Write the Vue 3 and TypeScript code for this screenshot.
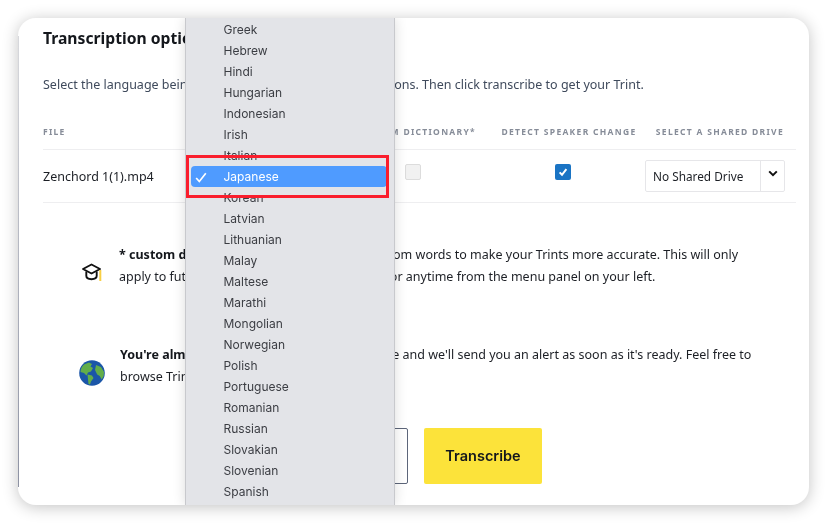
<script setup lang="ts">
const languages: string[] = ['Greek','Hebrew','Hindi','Hungarian','Indonesian','Irish','Italian','Japanese','Korean','Latvian','Lithuanian','Malay','Maltese','Marathi','Mongolian','Norwegian','Polish','Portuguese','Romanian','Russian','Slovakian','Slovenian','Spanish']
const selected = 'Japanese'
</script>

<template>
  <div class="page">
    <section class="card">
      <h1 class="title">Transcription options</h1>
      <p class="desc">Select the language being spoken and the transcription options. Then click transcribe to get your Trint.</p>

      <div class="table-row head">
        <span>FILE</span>
        <span class="center shift-a">CUSTOM DICTIONARY*</span>
        <span class="center shift-b">DETECT SPEAKER CHANGE</span>
        <span class="right">SELECT A SHARED DRIVE</span>
      </div>
      <div class="table-row body">
        <span class="file">Zenchord 1(1).mp4</span>
        <span class="center"><i class="box"></i></span>
        <span class="center">
          <i class="box on">
            <svg width="16" height="16" viewBox="0 0 16 16"><path d="M4.6 8.4 7 10.8 11.4 5.2" fill="none" stroke="#fff" stroke-width="2"/></svg>
          </i>
        </span>
        <div class="select">
          <span class="select-text">No Shared Drive</span>
          <span class="select-arrow">
            <svg width="10" height="7" viewBox="0 0 10 7"><path d="M1.2 1.4 5 5.2 8.8 1.4" fill="none" stroke="#111" stroke-width="2"/></svg>
          </span>
        </div>
      </div>

      <div class="note first">
        <span class="note-icon">
          <svg width="24" height="22" viewBox="0 0 24 22">
            <path d="M11.5 2.5 20 7l-8.500 4.500L3 7z" fill="none" stroke="#111" stroke-width="1.900" stroke-linejoin="round"/>
            <path d="M6.300 9.500v4.300c0 2.200 2.400 3.400 5.200 3.400s5.200-1.200 5.200-3.400V9.500" fill="none" stroke="#111" stroke-width="1.900"/>
            <rect x="19.300" y="8" width="2" height="11" fill="#f8cf45"/>
          </svg>
        </span>
        <div class="note-text">
          <p><b>* custom dictionary:</b> Add your own list of custom words to make your Trints more accurate. This will only</p>
          <p>apply to future uploads. Edit your dictionaries or anytime from the menu panel on your left.</p>
        </div>
      </div>

      <div class="note second">
        <span class="note-icon">
          <svg width="26" height="26" viewBox="0 0 26 26">
            <circle cx="13" cy="13" r="12.800" fill="#1b56a8"/>
            <path d="M5 4.500 10 2.500 13 4l-1.500 2.500L14 8l-2 3.500-3 1-1.500 3L5 13l-3.500-1C1.500 9 3 6 5 4.500z" fill="#63ae4a"/>
            <path d="M8.500 14.500 13 15.500 14.500 18 12 21.500 11 24.500 9.500 24 9 19.500z" fill="#63ae4a"/>
            <path d="M17 5l5 2 3 5-.3 4-2 3.500-2-3.500-2.500-1.500L16 10z" fill="#63ae4a"/>
          </svg>
        </span>
        <div class="note-text">
          <p><b>You're almost there!</b> We're transcribing the file and we'll send you an alert as soon as it's ready. Feel free to</p>
          <p>browse Trint while you wait.</p>
        </div>
      </div>

      <div class="actions">
        <button class="btn cancel" type="button">Cancel</button>
        <button class="btn primary" type="button">Transcribe</button>
      </div>

      <ul class="menu">
        <li v-for="lang in languages" :key="lang" :class="{ active: lang === selected }">
          <svg v-if="lang === selected" class="tick" width="12" height="11" viewBox="0 0 12 11"><path d="M1.200 6 4.300 9.500 10.800 1.200" fill="none" stroke="#fff" stroke-width="1.700"/></svg>
          {{ lang }}
        </li>
      </ul>
      <div class="callout"></div>
    </section>
  </div>
</template>

<style>
html, body { background: #fff; }
</style>

<style scoped>
.page {
  width: 827px;
  height: 523px;
  box-sizing: border-box;
  padding: 18px;
  overflow: hidden;
  font-family: "Noto Sans", sans-serif;
}
.card {
  position: relative;
  width: 791px;
  height: 487px;
  box-sizing: border-box;
  padding: 8px 13px 0 25px;
  background: #fff;
  border-radius: 18px;
  box-shadow: 0 2px 16px rgba(0, 0, 0, .24);
  overflow: hidden;
  filter: blur(.35px);
}
.card::before {
  content: "";
  position: absolute;
  left: 0;
  top: 18px;
  bottom: 18px;
  width: 1px;
  background: linear-gradient(#d8d9dd, #8d92a3);
}
.title {
  margin: 0;
  font-size: 15.700px;
  line-height: 24px;
  font-weight: 700;
  color: #14171c;
}
.desc {
  margin: 25px 0 0;
  font-size: 12.500px;
  line-height: 20px;
  color: #3f4a5c;
  white-space: nowrap;
}
.table-row {
  display: grid;
  grid-template-columns: 298px 144px 156px 155px;
  align-items: center;
}
.head {
  margin-top: 29px;
  height: 16px;
  padding-bottom: 9px;
  border-bottom: 1px solid #eeeef0;
  font-size: 8.500px;
  line-height: 16px;
  font-weight: 700;
  letter-spacing: 1.300px;
  color: #868c98;
  white-space: nowrap;
}
.body {
  height: 52px;
  border-bottom: 1px solid #eeeef0;
}
.center { text-align: center; }
.shift-a { padding-left: 6px; }
.shift-b { padding-left: 12px; }
.right { text-align: right; padding-right: 12px; }
.file { font-size: 12.500px; color: #1c1f25; }
.box {
  display: block;
  width: 16px;
  height: 16px;
  margin: -8px auto 0;
  box-sizing: border-box;
  border: 1px solid #dcdcdc;
  border-radius: 2px;
  background: #f1f1f1;
}
.box.on {
  border: 0;
  background: #1a74c4;
}
.box svg { display: block; }
.select {
  display: flex;
  width: 140px;
  height: 32px;
  box-sizing: border-box;
  border: 1px solid #e6e6e9;
  border-radius: 2px;
  justify-self: start;
  margin-left: 4px;
}
.select-text {
  flex: 1;
  padding-left: 7px;
  font-size: 11.800px;
  line-height: 30px;
  color: #1c1f25;
  white-space: nowrap;
}
.select-arrow {
  width: 24px;
  border-left: 1px solid #e6e6e9;
  display: flex;
  justify-content: center;
  padding-top: 9px;
  box-sizing: border-box;
}
.select-arrow svg { display: block; }
.note {
  display: flex;
  align-items: center;
  padding-left: 36px;
  font-size: 12.500px;
  line-height: 22px;
  color: #1c1f25;
}
.note p { margin: 0; white-space: nowrap; }
.note b { font-weight: 700; color: #14171c; }
.first { margin-top: 41px; }
.second { margin-top: 56px; }
.note-icon {
  width: 26px;
  margin-right: 15px;
  display: flex;
  justify-content: center;
  padding-top: 14px;
}
.first .note-icon { margin-right: 14px; }
.note-icon svg { display: block; }
.actions {
  display: flex;
  margin: 40px 0 0 234px;
  gap: 16px;
}
.btn {
  height: 56px;
  padding: 0 0 2px;
  border-radius: 2px;
  font-family: Inter, sans-serif;
  font-size: 14.500px;
  font-weight: 600;
  color: #14171c;
}
.cancel {
  width: 131px;
  background: #fff;
  border: 1px solid #5c6579;
}
.primary {
  width: 118px;
  background: #fce33a;
  border: 0;
}
.menu {
  position: absolute;
  left: 167px;
  top: 0;
  bottom: 0;
  width: 210px;
  margin: 0;
  padding: 1px 5px 0;
  box-sizing: border-box;
  list-style: none;
  background: #e3e4e8;
  border-left: 1px solid #c8c9cd;
  border-right: 1px solid #c8c9cd;
  box-shadow: 0 0 12px rgba(0, 0, 0, .14);
  overflow: hidden;
  font-family: Inter, sans-serif;
  font-size: 12px;
  color: #3b3d43;
}
.menu li {
  position: relative;
  height: 21px;
  line-height: 21px;
  padding-left: 32.500px;
  white-space: nowrap;
}
.menu li.active {
  background: #4f9bff;
  color: #fff;
  border-radius: 4px;
  margin-right: 2px;
}
.tick {
  position: absolute;
  left: 4px;
  top: 6px;
}
.callout {
  position: absolute;
  left: 168px;
  top: 137px;
  width: 203px;
  height: 43px;
  box-sizing: border-box;
  border: 3px solid #fa1e2d;
}
</style>
